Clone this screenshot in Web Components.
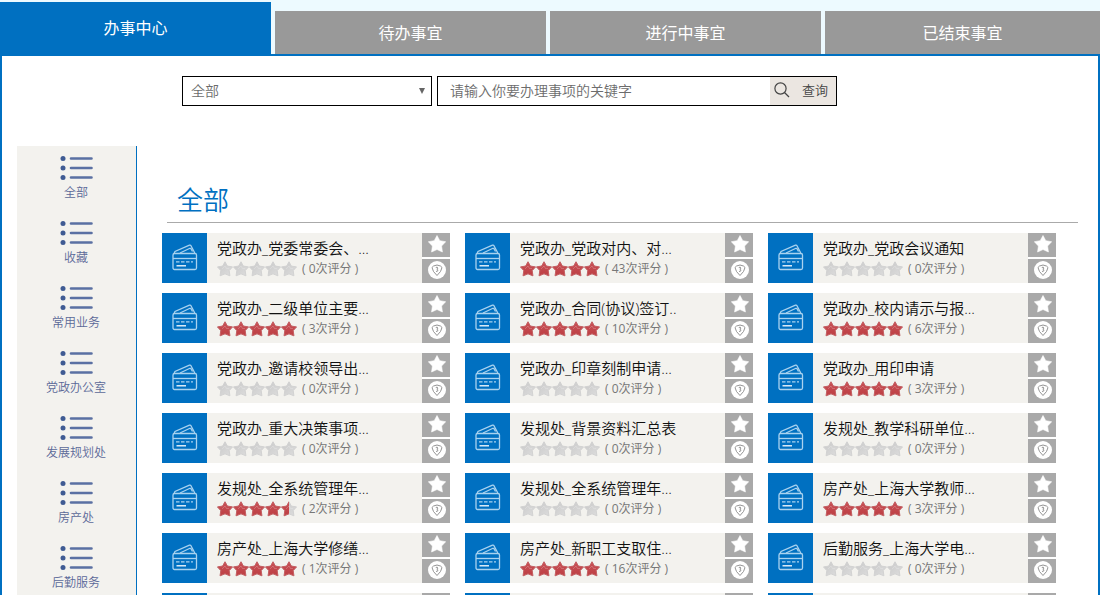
<!DOCTYPE html>
<html lang="zh-CN">
<head>
<meta charset="utf-8">
<title>办事中心</title>
<style>
html, body { margin: 0; height: 100%; }
body { background: #edfaff; font-family: "Open Sans", "Noto Sans CJK SC", sans-serif; font-weight: 350; overflow: hidden; }
</style>
</head>
<body>
<service-center></service-center>
<script>
function define(name, html, setup) {
  const template = document.createElement('template');
  template.innerHTML = html;
  customElements.define(name, class extends HTMLElement {
    constructor() {
      super();
      this.attachShadow({ mode: 'open' }).append(template.content.cloneNode(true));
    }
    connectedCallback() { if (setup) setup(this, this.shadowRoot); }
  });
}

define('tab-item', `
<style>
:host { display: flex; align-items: flex-end; margin-right: 4px; }
:host(:last-child) { margin-right: 0; }
button { flex: 1; height: 43px; border: 0; padding: 0; background: #999; color: #fff; font: 400 16px/24px "Open Sans", "Noto Sans CJK SC", sans-serif; }
:host([active]) button { height: 52px; background: #0070c1; }
</style>
<button type="button"><slot></slot></button>`);

define('search-bar', `
<style>
:host { display: flex; gap: 5px; color: #6c6c6c; }
.pick { position: relative; flex: 0 0 250px; }
select, .box { box-sizing: border-box; height: 30px; border: 1px solid #000; background: #fff; }
select, input, button { font: 350 14px/20px "Open Sans", "Noto Sans CJK SC", sans-serif; color: inherit; margin: 0; border-radius: 0; }
select { appearance: none; width: 100%; padding: 0 8px; }
.pick svg { position: absolute; right: 6px; top: 12px; pointer-events: none; }
.box { display: flex; flex: 0 0 400px; }
input { flex: 1; min-width: 0; border: 0; padding: 0 12px; background: none; outline: 0; }
input::placeholder { color: #6c6c6c; opacity: 1; }
button { display: flex; align-items: center; justify-content: space-between; width: 66px; border: 0; padding: 0 8px 2px 4px; background: #ebe6e1; color: #444; font-size: 13px; }
</style>
<div class="pick"><select aria-label="分类"><option>全部</option></select>
<svg width="8" height="7"><path d="M1 0h6L4 6z" fill="#666"/></svg></div>
<form class="box"><input type="text" aria-label="关键字" placeholder="请输入你要办理事项的关键字">
<button type="button"><svg width="16" height="16" fill="none" stroke="#444" stroke-width="1.2"><circle cx="6.500" cy="6.500" r="5.600"/><path d="M10.500 10.500L15 15"/></svg><span>查询</span></button></form>`);

define('category-link', `
<style>
:host { display: block; }
a { display: flex; flex-direction: column; align-items: center; gap: 3px; height: 55px; padding: 10px 1px 0 0; color: #5b6998; font-size: 12px; line-height: 20px; text-decoration: none; }
</style>
<a href="#"><svg width="34" height="24"><g fill="#3f5b93"><circle cx="4" cy="2.500" r="2.500"/><circle cx="4" cy="12" r="2.500"/><circle cx="4" cy="21.500" r="2.500"/></g><path d="M12 2.500h20.500M12 12h20.500M12 21.500h20.500" stroke="#5a70a3" stroke-width="2.600" stroke-linecap="round"/></svg><span><slot></slot></span></a>`);

const STAR = 'M8 .8L10.400 5.100L15.500 5.900L12.200 9.600L12.900 14.800L8 12.800L3.100 14.800L3.800 9.600L.5 5.900L5.600 5.100Z';

define('star-rating', `
<style>
:host { display: block; width: 80px; height: 16px; }
svg { display: block; }
</style>
<svg width="80" height="16"></svg>`, (el, root) => {
  const value = Number(el.getAttribute('value'));
  const row = (fill, edge) => [0, 1, 2, 3, 4].map(i =>
    `<g transform="translate(${i * 16} 0)"><path d="${STAR}" fill="${fill}" stroke="${edge}" stroke-width="1"/><path d="M5 8L8 5L9.500 7.500L12 7.500" fill="none" stroke="#fff" stroke-opacity=".2"/></g>`).join('');
  root.querySelector('svg').innerHTML =
    `<defs><linearGradient id="g" x2="1" y2="1"><stop stop-color="#c8c8c8"/><stop offset="1" stop-color="#dedede"/></linearGradient>
     <linearGradient id="r" x2="0" y2="1"><stop stop-color="#c85055"/><stop offset="1" stop-color="#bd3f44"/></linearGradient>
     <clipPath id="c"><rect width="${value * 16}" height="16"/></clipPath></defs>
     ${row('url(#g)', '#d2d2d2')}<g clip-path="url(#c)">${value ? row('url(#r)', '#c65f62') : ''}</g>`;
});

define('service-card', `
<style>
:host { display: grid; grid-template-columns: 45px 1fr 28px; height: 50px; background: #f3f2ee; }
.icon { background: #0070c1; display: flex; align-items: center; justify-content: center; }
.text { min-width: 0; padding: 5px 0 0 10px; overflow: hidden; }
h3 { margin: 0; font-size: 15px; line-height: 21px; font-weight: inherit; color: #111; white-space: nowrap; }
.score { display: flex; align-items: center; gap: 5px; color: #777; font-size: 12px; line-height: 20px; font-weight: 400; white-space: nowrap; }
.tools { display: grid; grid-template-rows: 1fr 1fr; gap: 2px; background: #fff; }
.tools button { border: 0; padding: 0 0 2px 2px; background: #a9a9a9; display: flex; align-items: center; justify-content: center; }
</style>
<div class="icon"><svg width="26" height="28" fill="none" stroke="#a9d2ef" stroke-width="1.300"><rect x="1" y="9.500" width="23.500" height="16" rx="1.500"/><path d="M1 14.500h23.500"/><path d="M2 9.500L3 7.500L17.500 1.200Q18.500 .8 19 1.800L22.800 9M8 9L18.500 4M18.500 4L20.500 7.500"/><path d="M4 17.800h17" stroke-dasharray="3.500 1.500"/><path d="M4.500 21.800h9.500" stroke="#fff"/></svg></div>
<div class="text"><h3></h3><div class="score"></div></div>
<div class="tools">
<button type="button" aria-label="收藏"><svg width="18" height="18"><path d="M9 .5L11.800 5.700L17.700 6.700L13.600 11L14.400 17L9 14.500L3.600 17L4.400 11L.3 6.700L6.200 5.700Z" fill="#fff" stroke="#fff" stroke-width=".6" stroke-linejoin="round"/></svg></button>
<button type="button" aria-label="指南"><svg width="18" height="18" fill="none" stroke="#888" stroke-width=".9"><circle cx="9" cy="9" r="9" fill="#fff" stroke="none"/><path d="M4 6.500Q4.500 4.800 9 4Q13.500 4.800 14 6.500Q13.500 10.500 9 14.500Q4.500 10.500 4 6.500Z"/><path d="M7.800 6.500Q9.500 5.500 9.800 7Q9.800 8 8.800 8.200Q10.200 8.600 9.800 9.800Q9.200 10.800 8 10.300"/></svg></button>
</div>`, (el, root) => {
  root.querySelector('h3').textContent = el.getAttribute('name') || '';
  const votes = el.getAttribute('votes');
  if (votes !== null) root.querySelector('.score').innerHTML =
    `<star-rating value="${el.getAttribute('stars')}"></star-rating><span>( ${votes}次评分 )</span>`;
});

define('service-center', `
<style>
:host { display: flex; flex-direction: column; height: 100vh; overflow: hidden; }
nav { display: grid; grid-template-columns: repeat(4, 1fr); padding-top: 2px; flex: none; }
.panel { box-sizing: border-box; flex: 1; min-height: 0; overflow: hidden; display: flex; flex-direction: column; border: solid #0070c1; border-width: 2px 2px 0; background: #fff; }
search-bar { margin: 20px 0 40px 180px; flex: none; }
.body { flex: 1; min-height: 0; display: grid; grid-template-columns: 120px 1fr; gap: 25px; padding: 0 20px 0 15px; }
aside { box-sizing: border-box; border-right: 1px solid #0070c1; background: #f3f2ee; min-height: 0; overflow: hidden; }
main { min-height: 0; overflow: hidden; padding-top: 32px; }
h2 { margin: 0 0 10px 5px; padding: 0 10px; height: 44px; border-bottom: 1px solid #aaa; color: #0070c1; font-size: 26px; line-height: 44px; font-weight: inherit; }
.cards { display: grid; grid-template-columns: repeat(3, 1fr); gap: 10px 15px; padding-right: 22px; }
</style>
<nav><tab-item active>办事中心</tab-item><tab-item>待办事宜</tab-item><tab-item>进行中事宜</tab-item><tab-item>已结束事宜</tab-item></nav>
<div class="panel">
<search-bar></search-bar>
<div class="body">
<aside><category-link>全部</category-link><category-link>收藏</category-link><category-link>常用业务</category-link><category-link>党政办公室</category-link><category-link>发展规划处</category-link><category-link>房产处</category-link><category-link>后勤服务</category-link></aside>
<main><h2>全部</h2><div class="cards">
<service-card name="党政办_党委常委会、..." stars="0" votes="0"></service-card>
<service-card name="党政办_党政对内、对..." stars="5" votes="43"></service-card>
<service-card name="党政办_党政会议通知" stars="0" votes="0"></service-card>
<service-card name="党政办_二级单位主要..." stars="5" votes="3"></service-card>
<service-card name="党政办_合同(协议)签订.." stars="5" votes="10"></service-card>
<service-card name="党政办_校内请示与报..." stars="5" votes="6"></service-card>
<service-card name="党政办_邀请校领导出..." stars="0" votes="0"></service-card>
<service-card name="党政办_印章刻制申请..." stars="0" votes="0"></service-card>
<service-card name="党政办_用印申请" stars="5" votes="3"></service-card>
<service-card name="党政办_重大决策事项..." stars="0" votes="0"></service-card>
<service-card name="发规处_背景资料汇总表" stars="0" votes="0"></service-card>
<service-card name="发规处_教学科研单位..." stars="0" votes="0"></service-card>
<service-card name="发规处_全系统管理年..." stars="4.5" votes="2"></service-card>
<service-card name="发规处_全系统管理年..." stars="0" votes="0"></service-card>
<service-card name="房产处_上海大学教师..." stars="5" votes="3"></service-card>
<service-card name="房产处_上海大学修缮..." stars="5" votes="1"></service-card>
<service-card name="房产处_新职工支取住..." stars="5" votes="16"></service-card>
<service-card name="后勤服务_上海大学电..." stars="0" votes="0"></service-card>
<service-card></service-card><service-card></service-card><service-card></service-card>
</div></main>
</div>
</div>`);
</script>
</body>
</html>
